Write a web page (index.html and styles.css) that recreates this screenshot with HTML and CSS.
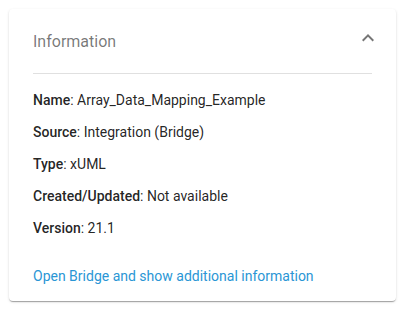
FILE: index.html
```html
<!DOCTYPE html>
<html lang="en">
<head>
    <meta charset="UTF-8">
    <meta name="viewport" content="width=device-width, initial-scale=1.0">
    <title>Information</title>
    <link rel="stylesheet" href="styles.css">
</head>
<body>
    <div class="card">
        <div class="card-header">
            <span class="card-title">Information</span>
            <span class="toggle">
                <svg width="24" height="24" viewBox="0 0 24 24"><path d="M12 8l-6 6 1.41 1.41L12 10.83l4.59 4.58L18 14z" fill="currentColor"/></svg>
            </span>
        </div>
        <div class="card-body">
            <p><b>Name</b>: Array_Data_Mapping_Example</p>
            <p><b>Source</b>: Integration (Bridge)</p>
            <p><b>Type</b>: xUML</p>
            <p><b>Created/Updated</b>: Not available</p>
            <p><b>Version</b>: 21.1</p>
            <a href="#" class="more-link">Open Bridge and show additional information</a>
        </div>
    </div>
</body>
</html>
```

FILE: styles.css
```css
body {
    font-family: 'Roboto', sans-serif;
    margin: 0;
    padding: 9px;
    background-color: #fff;
    color: rgba(0, 0, 0, 0.87);
}
.card {
    width: 387px;
    height: 292px;
    box-sizing: border-box;
    background: #fff;
    border-radius: 4px;
    box-shadow: 0 2px 1px -1px rgba(0, 0, 0, 0.2), 0 1px 1px 0 rgba(0, 0, 0, 0.14), 0 1px 3px 0 rgba(0, 0, 0, 0.12);
}
.card-header {
    height: 64px;
    margin: 0 24px;
    display: flex;
    align-items: center;
    justify-content: space-between;
    border-bottom: 1px solid #e0e0e0;
}
.card-title {
    font-size: 16px;
    line-height: 24px;
    padding-top: 2px;
    color: rgba(0, 0, 0, 0.54);
}
.toggle {
    display: flex;
    margin-right: -8px;
    margin-bottom: 6px;
    color: rgba(0, 0, 0, 0.54);
}
.card-body {
    padding: 16px 24px;
    font-size: 14px;
    line-height: 20px;
}
.card-body p {
    margin: 0 0 12px;
}
.card-body b {
    font-weight: 500;
}
.more-link {
    display: block;
    margin-top: 28px;
    color: #2a96d5;
    text-decoration: none;
}
```
